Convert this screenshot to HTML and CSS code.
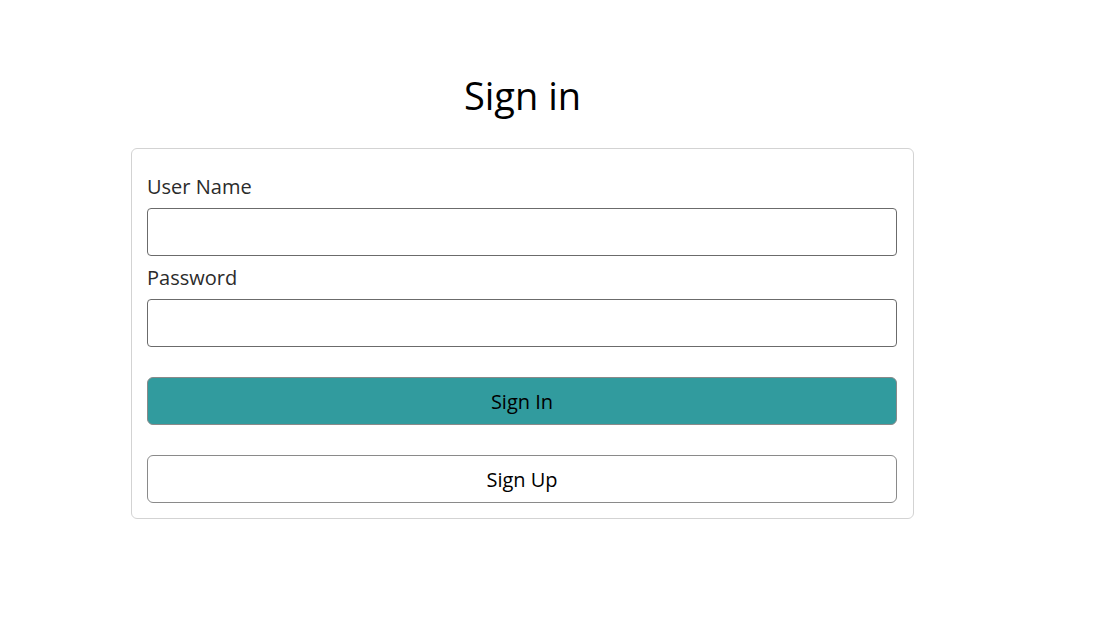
FILE: index.html
```html
<!DOCTYPE html>
<html lang="en">
<head>
<meta charset="utf-8">
<title>Sign in</title>
<link rel="stylesheet" href="styles.css">
</head>
<body>
<main class="page">
  <h1 class="title">Sign in</h1>
  <form class="card">
    <label class="label" for="user">User Name</label>
    <input class="input" id="user" type="text">
    <label class="label label-next" for="pass">Password</label>
    <input class="input" id="pass" type="password">
    <button class="btn btn-primary" type="button">Sign In</button>
    <button class="btn btn-secondary" type="button">Sign Up</button>
  </form>
</main>
</body>
</html>
```
FILE: styles.css
```css
* { box-sizing: border-box; }
html, body { margin: 0; padding: 0; background: #fff; }
body {
  font-family: "Open Sans", "Noto Sans", sans-serif;
  color: #212529;
}
.page {
  width: 914px;
  padding-left: 131px;
  padding-top: 71px;
}
.title {
  margin: 0 0 29px;
  font-size: 38px;
  line-height: 48px;
  font-weight: 400;
  color: #000;
  text-align: center;
}
.card {
  display: flex;
  flex-direction: column;
  width: 783px;
  border: 1px solid #d3d3d3;
  border-radius: 6px;
  padding: 24px 16px 15px 15px;
}
.label {
  font-size: 20px;
  line-height: 28px;
  margin-bottom: 7px;
  color: #2b2b2b;
}
.label-next { margin-top: 8px; }
.input {
  height: 48px;
  width: 100%;
  border: 1px solid #6b6b6b;
  border-radius: 4px;
  background: #fff;
  font: inherit;
}
.btn {
  height: 48px;
  width: 100%;
  margin-top: 30px;
  border: 1px solid #8a8a8a;
  border-radius: 6px;
  font-family: inherit;
  font-size: 20px;
  font-weight: 500;
  color: #000;
  background: #fff;
}
.btn-primary { background: #319b9e; }
```
